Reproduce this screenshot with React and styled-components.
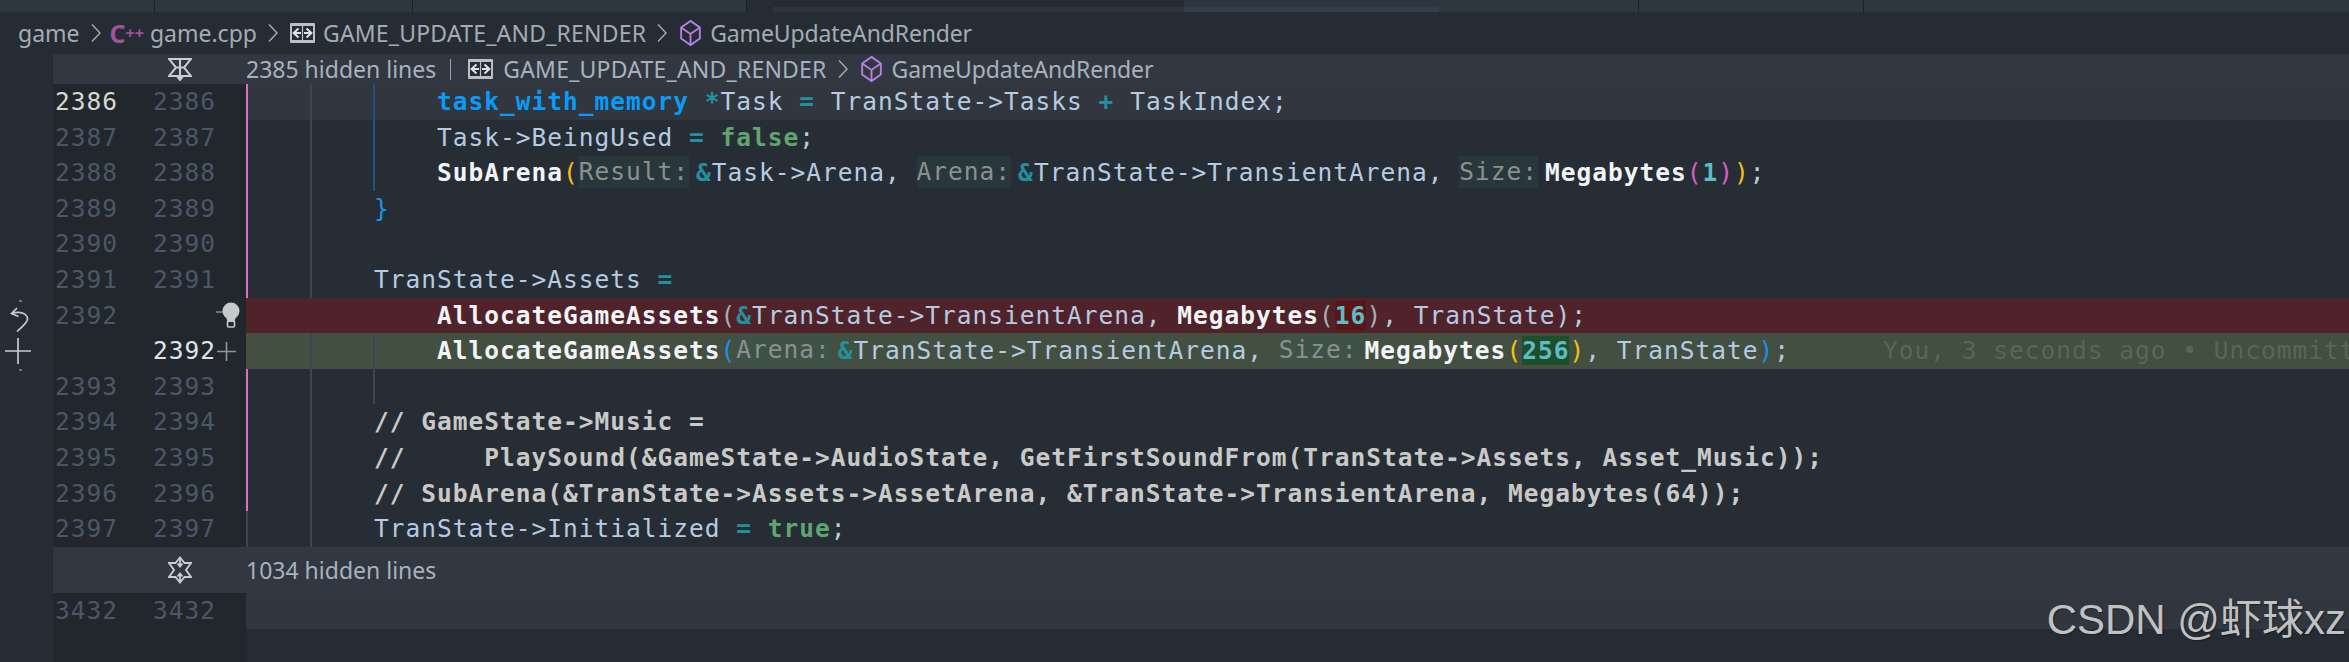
import React from "react";
import styled, { createGlobalStyle } from "styled-components";

const GlobalStyle = createGlobalStyle`
  html, body {
    margin: 0;
    padding: 0;
    background: #262c34;
  }
`;

const Page = styled.div`
  position: relative;
  width: 2349px;
  height: 662px;
  overflow: hidden;
  display: flex;
  flex-direction: column;
  background: #262c34;
`;

const TabBar = styled.div`
  height: 12px;
  display: flex;
  background: #2e3640;
`;

const Tab = styled.div`
  width: ${(p) => p.$w}px;
  flex: none;
  box-sizing: border-box;
  background: ${(p) => p.$bg || "transparent"};
  border-right: ${(p) => (p.$line ? "1px solid #1d2229" : "none")};
  display: flex;
  align-items: flex-end;
  justify-content: flex-end;
`;

const TabStripe = styled.div`
  height: 5px;
  width: ${(p) => p.$w}px;
  margin-right: ${(p) => (p.$left ? "auto" : "0")};
  background: ${(p) => p.$c};
`;

const Crumbs = styled.div`
  height: 42px;
  display: flex;
  align-items: center;
  padding-left: 18px;
  background: #262c34;
  font-family: "Noto Sans", sans-serif;
  font-size: 23px;
  color: #a3acb5;
`;

const Chevron = styled.span`
  display: inline-flex;
  margin: 0 12px 0 11px;
`;

const CrumbIcon = styled.span`
  display: inline-flex;
  margin-right: ${(p) => p.$mr ?? 8}px;
`;

const CppMark = styled.span`
  display: inline-flex;
  align-items: center;
  color: #a0529f;
  font-weight: 700;
  font-size: 25px;
  margin: 0 6px 0 -3px;
  sup {
    font-size: 16px;
    line-height: 1;
  }
`;

const Label = styled.span`
  white-space: pre;
  letter-spacing: ${(p) => p.$ls || 0}px;
`;

const Diff = styled.div`
  flex: 1;
  display: flex;
  min-height: 0;
`;

const Strip = styled.div`
  width: 53px;
  flex: none;
  position: relative;
  background: #262c34;
`;

const StripIcon = styled.span`
  position: absolute;
  left: ${(p) => p.$x}px;
  top: ${(p) => p.$y}px;
  display: flex;
`;

const StripDot = styled.i`
  position: absolute;
  left: 19px;
  top: ${(p) => p.$y}px;
  width: 3px;
  height: 2px;
  background: #6c747d;
`;

const Main = styled.div`
  flex: 1;
  display: flex;
  flex-direction: column;
  min-width: 0;
  background: #262c34;
`;

const FoldBar = styled.div`
  height: ${(p) => p.$h}px;
  flex: none;
  display: flex;
  align-items: center;
  background: #323842;
  box-shadow: 0 1px 2px rgba(20, 24, 30, 0.35);
  font-family: "Noto Sans", sans-serif;
  font-size: 23px;
  color: #a8b2bd;
`;

const FoldIconCell = styled.span`
  width: 193px;
  flex: none;
  display: flex;
  justify-content: center;
  padding-left: 61px;
  box-sizing: border-box;
`;

const Divider = styled.span`
  width: 1px;
  height: 21px;
  margin: 0 17px 0 14px;
  background: #9aa4ae;
`;

const Line = styled.div`
  height: 35.62px;
  flex: none;
  display: flex;
  font-family: "DejaVu Sans Mono", monospace;
  font-size: 24.5px;
  letter-spacing: 1px;
  line-height: 35.62px;
`;

const Gutter = styled.div`
  width: 193px;
  flex: none;
  display: flex;
  background: #22272e;
  position: relative;
  color: #4a5767;
`;

const GutterFill = styled(Gutter)`
  flex: 1;
`;

const Num = styled.span`
  width: ${(p) => p.$w}px;
  padding-left: ${(p) => p.$pl}px;
  box-sizing: border-box;
  flex: none;
  color: ${(p) => p.$c || "inherit"};
`;

const Plus = styled.span`
  display: flex;
  align-items: center;
  margin-left: 2px;
`;

const Bulb = styled.span`
  position: absolute;
  right: 6px;
  top: 4px;
  display: flex;
`;

const Code = styled.div`
  flex: 1;
  position: relative;
  box-sizing: border-box;
  white-space: pre;
  overflow: hidden;
  min-width: 0;
  color: #b6cbe2;
  background: ${(p) =>
    ({ del: "#50232b", add: "#434f41", hl: "#31363f" })[p.$kind] || "#272d35"};
  border-left: 2px solid ${(p) => p.$edge || "transparent"};
`;

const Guide = styled.i`
  position: absolute;
  top: 0;
  bottom: 0;
  left: ${(p) => p.$x}px;
  width: 1.5px;
  background: ${(p) => p.$c || "#3d4551"};
`;

const Kw = styled.b`
  color: #0a9bf6;
  font-weight: 700;
`;
const Op = styled.span`
  color: #22919e;
  font-weight: 700;
`;
const Bool = styled.b`
  color: #5fa56f;
  font-weight: 700;
`;
const Fn = styled.b`
  color: #f2f4f7;
  font-weight: 700;
`;
const Comment = styled.b`
  color: #c9c9c7;
  font-weight: 700;
`;
const Lit = styled.span`
  color: #5cbcc8;
  font-weight: 700;
  background: ${(p) => p.$bg || "transparent"};
`;
const Paren = styled.span`
  color: ${(p) => p.$c};
`;
const Hint = styled.span`
  display: inline-block;
  height: 32px;
  line-height: 32px;
  vertical-align: top;
  margin: 1px 7px 0 0;
  color: #8b908f;
  background: ${(p) => (p.$green ? "#3f5248" : "#28373c")};
`;
const Blame = styled.span`
  color: #5a6559;
  margin-left: 93px;
`;

const Watermark = styled.div`
  position: absolute;
  right: 3px;
  top: 597px;
  font-family: "Liberation Sans", "Noto Sans CJK SC", sans-serif;
  font-size: 42px;
  line-height: 46px;
  color: #bfc1c3;
  text-shadow: 1px 1px 1px rgba(20, 20, 20, 0.6);
`;

const ChevronIcon = () => (
  <svg width="10" height="18" viewBox="0 0 10 18" fill="none" stroke="#a3acb5" strokeWidth="1.4">
    <path d="M1 0.5 L9 9 L1 17.5" />
  </svg>
);

const NamespaceIcon = () => (
  <svg width="25" height="20" viewBox="0 0 25 20">
    <rect x="0" y="0" width="25" height="20" rx="1" fill="#b9c0c8" />
    <rect x="2" y="3" width="21" height="14" fill="#262c34" />
    <path d="M11 10 H4 M14 10 H21 M8.5 5.5 L3.6 10 L8.5 14.5 M16.5 5.5 L21.4 10 L16.5 14.5" stroke="#dfe3e7" strokeWidth="2" fill="none" />
    <path d="M12.5 3 V17" stroke="#b9c0c8" strokeWidth="1.2" />
  </svg>
);

const CubeIcon = () => (
  <svg width="23" height="28" viewBox="0 0 24 30" fill="none" stroke="#b77fe0" strokeWidth="2">
    <path d="M12 2 L22 9 V21 L12 28 L2 21 V9 Z" />
    <path d="M2 9 L12 16 L22 9 M12 16 V28" />
  </svg>
);

const FoldIcon = ({ open }) =>
  open ? (
    <svg width="24" height="24" viewBox="0 0 24 24" fill="none" stroke="#c9ced4" strokeWidth="2">
      <path d="M1 2 H23 L16 10.5 L23 19 H1 L8 10.5 Z M8 10.5 H16 M12 1 V23 M8.5 18.5 L12 23 L15.5 18.5" />
    </svg>
  ) : (
    <svg width="24" height="28" viewBox="0 0 24 28" fill="none" stroke="#c9ced4" strokeWidth="1.8">
      <path d="M1 7 H7.5 L12 1.5 L16.5 7 H23 L18 14 L23 21 H16.5 L12 26.5 L7.5 21 H1 L6 14 Z" />
      <path d="M12 1.5 V10 M9.5 7.5 L12 10.5 L14.5 7.5 M12 26.5 V18 M9.5 20.5 L12 17.5 L14.5 20.5" />
    </svg>
  );

const ns = <NamespaceIcon />;

const guides = (list) => list.map(([x, c]) => <Guide key={x} $x={x} $c={c} />);
const g1 = [[62]];
const g2 = [[62], [125, "#24507a"]];
const g3 = [[62], [125]];

const rows = [
  {
    a: "2386", b: "2386", kind: "hl", aColor: "#d8d8cf", edge: "#d670c8", guides: g2,
    code: (
      <>{"            "}<Kw>task_with_memory</Kw> <Op>*</Op>Task <Op>=</Op> TranState-&gt;Tasks <Op>+</Op> TaskIndex;</>
    ),
  },
  {
    a: "2387", b: "2387", edge: "#d670c8", guides: g2,
    code: <>{"            "}Task-&gt;BeingUsed <Op>=</Op> <Bool>false</Bool>;</>,
  },
  {
    a: "2388", b: "2388", edge: "#d670c8", guides: g2,
    code: (
      <>
        {"            "}<Fn>SubArena</Fn><Paren $c="#f2c21a">(</Paren><Hint>Result:</Hint><Op>&amp;</Op>Task-&gt;Arena, <Hint>Arena:</Hint>
        <Op>&amp;</Op>TranState-&gt;TransientArena, <Hint>Size:</Hint><Fn>Megabytes</Fn><Paren $c="#d65fc8">(</Paren><Lit>1</Lit><Paren $c="#d65fc8">)</Paren><Paren $c="#f2c21a">)</Paren>;
      </>
    ),
  },
  { a: "2389", b: "2389", edge: "#d670c8", guides: g1, code: <>{"        "}<Paren $c="#1e90e8">{"}"}</Paren></> },
  { a: "2390", b: "2390", edge: "#d670c8", guides: g1, code: "" },
  { a: "2391", b: "2391", edge: "#d670c8", guides: g1, code: <>{"        "}TranState-&gt;Assets <Op>=</Op></> },
  {
    a: "2392", kind: "del", bulb: true,
    code: (
      <>
        {"            "}<Fn>AllocateGameAssets</Fn><Paren $c="#a9adb5">(</Paren><Op>&amp;</Op>TranState-&gt;TransientArena, <Fn>Megabytes</Fn><Paren $c="#a9adb5">(</Paren><Lit $bg="#5c1517">16</Lit><Paren $c="#a9adb5">)</Paren>, TranState);
      </>
    ),
  },
  {
    b: "2392", bColor: "#dfe3e7", plus: true, kind: "add", guides: g3,
    code: (
      <>
        {"            "}<Fn>AllocateGameAssets</Fn><Paren $c="#1e90e8">(</Paren><Hint $green>Arena:</Hint><Op>&amp;</Op>TranState-&gt;TransientArena, <Hint $green>Size:</Hint><Fn>Megabytes</Fn><Paren $c="#f2c21a">(</Paren><Lit $bg="#1f4f2a">256</Lit><Paren $c="#f2c21a">)</Paren>, TranState<Paren $c="#1e90e8">)</Paren>;
        <Blame>You, 3 seconds ago • Uncommitted changes</Blame>
      </>
    ),
  },
  { a: "2393", b: "2393", edge: "#d670c8", guides: g3, code: "" },
  { a: "2394", b: "2394", edge: "#d670c8", guides: g1, code: <>{"        "}<Comment>// GameState-&gt;Music =</Comment></> },
  {
    a: "2395", b: "2395", edge: "#d670c8", guides: g1,
    code: <>{"        "}<Comment>//     PlaySound(&amp;GameState-&gt;AudioState, GetFirstSoundFrom(TranState-&gt;Assets, Asset_Music));</Comment></>,
  },
  {
    a: "2396", b: "2396", edge: "#d670c8", guides: g1,
    code: <>{"        "}<Comment>// SubArena(&amp;TranState-&gt;Assets-&gt;AssetArena, &amp;TranState-&gt;TransientArena, Megabytes(64));</Comment></>,
  },
  {
    a: "2397", b: "2397", edge: "#3d4551", guides: g1,
    code: <>{"        "}TranState-&gt;Initialized <Op>=</Op> <Bool>true</Bool>;</>,
  },
];

const CodeRow = ({ a, b, kind, aColor, bColor, edge, guides: gs, plus, bulb, code }) => (
  <Line>
    <Gutter>
      <Num $w={100} $pl={2} $c={aColor}>{a}</Num>
      <Num $w={62} $pl={0} $c={bColor}>{b}</Num>
      {plus && (
        <Plus>
          <svg width="19" height="19" viewBox="0 0 19 19" stroke="#8d949c" strokeWidth="1.6">
            <path d="M9.5 0 V19 M0 9.5 H19" />
          </svg>
        </Plus>
      )}
      {bulb && (
        <Bulb>
          <svg width="24" height="26" viewBox="0 0 24 26">
            <path d="M0 10 H8" stroke="#8d949c" strokeWidth="1.4" />
            <circle cx="15" cy="9" r="8.5" fill="#c6c8ca" />
            <path d="M10 14 H20 L18.5 20 H11.5 Z" fill="#c6c8ca" />
            <rect x="11.5" y="19" width="7" height="6" rx="1" fill="none" stroke="#c6c8ca" strokeWidth="1.6" />
          </svg>
        </Bulb>
      )}
    </Gutter>
    <Code $kind={kind} $edge={edge}>
      {gs && guides(gs)}
      {code}
    </Code>
  </Line>
);

export default function App() {
  return (
    <Page>
      <GlobalStyle />
      <TabBar>
        <Tab $w={155} $line />
        <Tab $w={258} $line />
        <Tab $w={334} $line />
        <Tab $w={437} $bg="#262c34">
          <TabStripe $w={411} $c="#2e3540" />
        </Tab>
        <Tab $w={455} $line>
          <TabStripe $w={255} $c="#363d4a" $left />
        </Tab>
        <Tab $w={225} $line />
        <Tab $w={485} />
      </TabBar>
      <Crumbs>
        game
        <Chevron><ChevronIcon /></Chevron>
        <CppMark>C<sup>++</sup></CppMark>
        game.cpp
        <Chevron><ChevronIcon /></Chevron>
        <CrumbIcon>{ns}</CrumbIcon>
        <Label $ls={0.2}>GAME_UPDATE_AND_RENDER</Label>
        <Chevron><ChevronIcon /></Chevron>
        <CrumbIcon><CubeIcon /></CrumbIcon>
        <Label $ls={-0.15}>GameUpdateAndRender</Label>
      </Crumbs>
      <Diff>
        <Strip>
          <StripDot $y={246} />
          <StripIcon $x={10} $y={253}>
            <svg width="19" height="25" viewBox="0 0 19 25" fill="none" stroke="#c4cad0" strokeWidth="1.7">
              <path d="M7 1 L1.5 6.5 L8.5 9.5 M1.5 6.5 C11 3.5 17.5 7 17.5 12 C17.5 16 12 19.5 7 24.5" />
            </svg>
          </StripIcon>
          <StripIcon $x={5} $y={284}>
            <svg width="26" height="26" viewBox="0 0 26 26" stroke="#c4cad0" strokeWidth="1.7">
              <path d="M13 0 V26 M0 13 H26" />
            </svg>
          </StripIcon>
          <StripDot $y={315} />
        </Strip>
        <Main>
          <FoldBar $h={30}>
            <FoldIconCell><FoldIcon open /></FoldIconCell>
            <Label>2385 hidden lines</Label>
            <Divider />
            <CrumbIcon $mr={10}>{ns}</CrumbIcon>
            <Label $ls={0.2}>GAME_UPDATE_AND_RENDER</Label>
            <Chevron><ChevronIcon /></Chevron>
            <CrumbIcon $mr={9}><CubeIcon /></CrumbIcon>
            <Label $ls={-0.15}>GameUpdateAndRender</Label>
          </FoldBar>
          {rows.map((r, i) => (
            <CodeRow key={i} {...r} />
          ))}
          <FoldBar $h={46}>
            <FoldIconCell><FoldIcon /></FoldIconCell>
            <Label>1034 hidden lines</Label>
          </FoldBar>
          <CodeRow a="3432" b="3432" kind="hl" code="" />
          <GutterFill />
        </Main>
      </Diff>
      <Watermark>CSDN @虾球xz</Watermark>
    </Page>
  );
}
